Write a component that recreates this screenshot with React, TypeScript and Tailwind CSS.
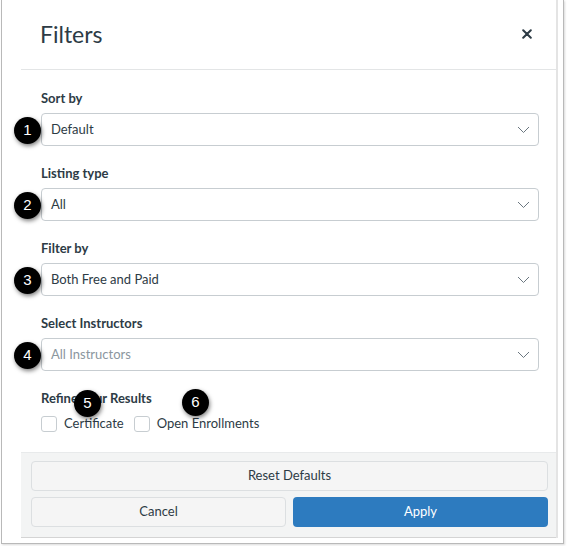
import React from "react";

const Badge = ({ n, className }: { n: number; className: string }) => (
  <div
    className={`absolute w-[27px] h-[27px] rounded-full bg-black text-white flex items-center justify-center text-[15px] shadow-[1px_2px_4px_rgba(0,0,0,0.5)] z-10 ${className}`}
    style={{ fontFamily: '"Liberation Sans", Arial, sans-serif' }}
  >
    {n}
  </div>
);

const Chevron = () => (
  <svg width="13" height="8" viewBox="0 0 13 8" className="shrink-0">
    <polyline points="1,1 6.5,6.5 12,1" fill="none" stroke="#6b7780" strokeWidth="1" />
  </svg>
);

const Field = ({
  label,
  value,
  n,
  placeholder,
}: {
  label: string;
  value: string;
  n: number;
  placeholder?: boolean;
}) => (
  <div className="flex flex-col">
    <div className="h-[20px] leading-[20px] text-[13px] font-bold text-[#2d3b45]">{label}</div>
    <div className="relative mt-[5px]">
      <Badge n={n} className="left-[-27px] top-[4px]" />
      <div className="h-[33px] border border-[#c7cdd1] rounded-[4px] bg-white flex items-center justify-between pl-[9px] pr-[8px]">
        <span className={`text-[13px] ${placeholder ? "text-[#8b969e]" : "text-[#2d3b45]"}`}>{value}</span>
        <Chevron />
      </div>
    </div>
  </div>
);

const Checkbox = ({ label }: { label: string }) => (
  <div className="flex items-center gap-[7px]">
    <div className="w-[16px] h-[16px] border border-[#c7cdd1] rounded-[3px] bg-white" />
    <span className="text-[13px] text-[#2d3b45]">{label}</span>
  </div>
);

export default function App() {
  return (
    <div
      className="w-[568px] h-[546px] bg-white pl-[1px] pr-[4px] pb-[2px]"
      style={{ fontFamily: 'Lato, "Open Sans", sans-serif' }}
    >
      <div className="w-full h-full border border-t-0 border-[#b9b9b9] shadow-[1px_1px_2px_rgba(0,0,0,0.15)] flex bg-white">
        <div className="w-[19px] shrink-0" />
        <div className="w-[537px] h-[538px] flex flex-col border-r-2 border-[#e4e4e4]">
          <div className="h-[70px] shrink-0 border-b border-[#e3e5e6] flex items-center justify-between pl-[19px] pr-[24px]">
            <span className="text-[23px] text-[#2d3b45]">Filters</span>
            <svg width="10" height="10" viewBox="0 0 10 10" className="mb-[1px]">
              <path d="M1.2 1.2 L8.8 8.8 M8.8 1.2 L1.2 8.8" stroke="#2d3b45" strokeWidth="2" strokeLinecap="round" />
            </svg>
          </div>
          <div className="flex-1 flex flex-col pl-[20px] pr-[17px] pt-[18px] gap-[17px]">
            <Field label="Sort by" value="Default" n={1} />
            <Field label="Listing type" value="All" n={2} />
            <Field label="Filter by" value="Both Free and Paid" n={3} />
            <Field label="Select Instructors" value="All Instructors" n={4} placeholder />
            <div className="relative flex flex-col">
              <div className="h-[20px] leading-[20px] text-[13px] font-bold text-[#2d3b45]">Refine Your Results</div>
              <div className="flex items-center gap-[10px] mt-[6px] h-[20px]">
                <Checkbox label="Certificate" />
                <Checkbox label="Open Enrollments" />
              </div>
              <Badge n={5} className="left-[33px] top-[2px]" />
              <Badge n={6} className="left-[141px] top-[1px]" />
            </div>
          </div>
          <div className="h-[86px] shrink-0 bg-[#f3f4f4] border-t border-[#e8eaeb] border-b border-b-[#d4d4d4] pt-[8px] pl-[10px] pr-[8px] flex flex-col gap-[6px]">
            <button className="h-[30px] w-full rounded-[4px] border border-[#dcdfe1] bg-[#f5f5f5] text-[13px] text-[#2d3b45]">
              Reset Defaults
            </button>
            <div className="grid grid-cols-2 gap-[7px]">
              <button className="h-[30px] rounded-[4px] border border-[#dcdfe1] bg-[#f5f5f5] text-[13px] text-[#2d3b45]">
                Cancel
              </button>
              <button className="h-[30px] rounded-[4px] bg-[#2d7bbf] text-[13px] text-white">Apply</button>
            </div>
          </div>
        </div>
      </div>
    </div>
  );
}
